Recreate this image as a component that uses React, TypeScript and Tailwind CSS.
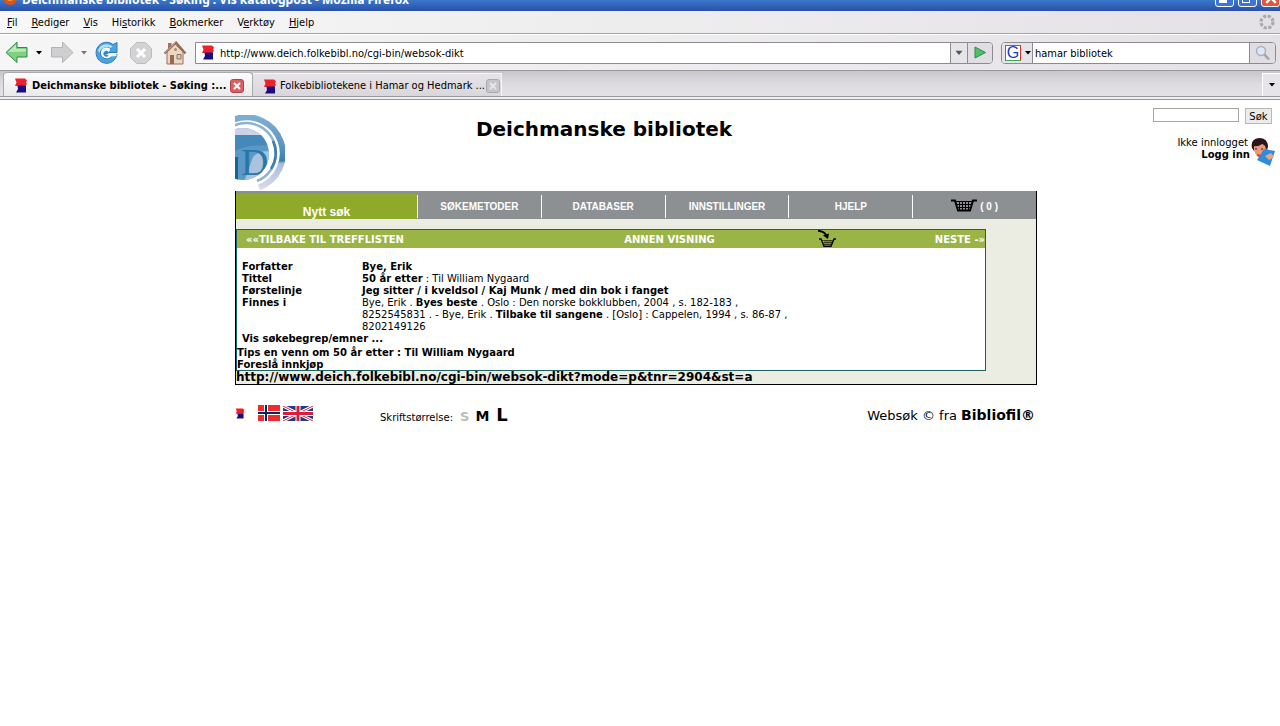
import type { ReactNode } from "react";

function Favicon({ className = "w-[14px] h-[15px]" }: { className?: string }) {
  return (
    <svg viewBox="0 0 14 15" className={className} aria-hidden="true">
      <path d="M1 .5h10l2 2-1 2 1 1.500-2 2H1l1.500-3.500z" fill="#ee2029" />
      <path d="M3.500 7.500H12v7H2l2-3.500z" fill="#1a0d80" />
    </svg>
  );
}

function Caret({ className = "text-black" }: { className?: string }) {
  return (
    <svg viewBox="0 0 6 4" className={`w-[6px] h-[4px] ${className}`} aria-hidden="true">
      <path d="M0 0h6L3 3.500z" fill="currentColor" />
    </svg>
  );
}

function Arrow({ forward = false }: { forward?: boolean }) {
  return (
    <svg viewBox="0 0 24 24" className="w-6 h-6" aria-hidden="true">
      {forward ? (
        <path d="M23 11.500 12.500 1v5.500H1.500v9.500h11v5.500z" fill="#cfcfd1" stroke="#b3b3b5" strokeLinejoin="round" />
      ) : (
        <>
          <path d="M1 11.500 12 1v5.500h10v9.500H12v5.500z" fill="#7fd083" stroke="#35884a" strokeLinejoin="round" />
          <path d="M3 11 11 3.500V8h10v2.500z" fill="#b9ebb3" />
        </>
      )}
    </svg>
  );
}

function Reload() {
  return (
    <svg viewBox="0 0 24 24" className="w-6 h-6" aria-hidden="true">
      <path d="M22 13A10.500 10.500 0 1 1 18 3.500l4-2V11.500H13l3-3.500A6 6 0 1 0 16.500 15z" fill="#4ba3df" stroke="#2e78bd" strokeLinejoin="round" />
      <path d="M3 9.500a9 9 0 0 1 14.500-4l-2 1.500A7.500 7.500 0 0 0 4.500 12z" fill="#b5e1f7" />
      <path d="M16 15.500A5 5 0 1 1 15.500 8.500L13 12h8.500v3z" fill="#eef7fc" />
      <path d="M13.500 14.500a2.800 2.800 0 1 1 0-3.500v2h-3z" fill="#2f86cd" />
    </svg>
  );
}

function Stop() {
  return (
    <svg viewBox="0 0 24 24" className="w-6 h-6" aria-hidden="true">
      <path d="M7.500 1.500h9l6 6v9l-6 6h-9l-6-6v-9z" fill="#d3d3d5" stroke="#bcbcbe" />
      <path d="m8 8 8 8m0-8-8 8" stroke="#fff" strokeWidth="3" />
    </svg>
  );
}

function Home() {
  return (
    <svg viewBox="0 0 24 24" className="w-6 h-6" aria-hidden="true">
      <path d="M5 2h3.500v7H5z" fill="#a8705a" />
      <path d="M4 11 12 3l8 8v12H4z" fill="#ead9c1" stroke="#96705a" />
      <path d="M1.500 12.500 13 1.500l9.500 11" fill="none" stroke="#94695a" strokeWidth="2.200" />
      <path d="M2 11.500 12.500 1.500" fill="none" stroke="#cdaa98" />
      <path d="M7 14h4v9H7z" fill="#9a6752" />
      <path d="M14 13.500h4V18h-4z" fill="#bcd3df" stroke="#96705a" />
      <circle cx="12.500" cy="8.500" r="1.500" fill="#b58569" />
    </svg>
  );
}

function Throbber() {
  return (
    <svg viewBox="0 0 16 16" className="w-4 h-4" aria-hidden="true">
      <circle cx="8" cy="8" r="6" fill="none" stroke="#aaaaac" strokeWidth="3.200" strokeDasharray="3.100 1.612" />
    </svg>
  );
}

function Basket() {
  return (
    <svg viewBox="0 0 26 13" className="mb-[3px] h-[13px] w-[26px]" aria-hidden="true">
      <path d="M0 1.500h4L7 11.500h12L22 1.500h4" fill="none" stroke="#000" strokeWidth="2" />
      <path d="M5 2.500h16M5.500 5.500h15M6.500 8.500h13M8.500 2v9M11.500 2v9M14.500 2v9M17.500 2v9" stroke="#000" />
    </svg>
  );
}

function AddToBasket() {
  return (
    <svg viewBox="0 0 18 18" className="w-[18px] h-[18px]" aria-hidden="true">
      <path d="M0 .800Q7 1 9 7" fill="none" stroke="#000" strokeWidth="1.800" />
      <path d="M5 5.500 10 9l1-5.500" fill="#000" />
      <path d="M1 9h2L6 16.300h7L16 9h2" fill="none" stroke="#000" strokeWidth="1.300" />
      <path d="M4 10.500h11M5 12.500h9M5 14.500h8M7 10v6M9 10v6M11 10v6M13 10v6" stroke="#000" strokeWidth=".500" />
    </svg>
  );
}

function Logo() {
  return (
    <svg viewBox="0 0 50 76" className="w-[50px] h-[76px]" role="img" aria-label="Deichmanske bibliotek">
      <defs>
        <clipPath id="disc">
          <circle cx="8" cy="39" r="26" />
        </clipPath>
        <linearGradient id="ring" x1="0" y1="0" x2="0" y2="1">
          <stop offset="0" stopColor="#7fadd2" />
          <stop offset=".4" stopColor="#5c95c2" />
          <stop offset=".62" stopColor="#3d80ad" />
          <stop offset=".66" stopColor="#a9bcdb" />
          <stop offset="1" stopColor="#d5d9ea" />
        </linearGradient>
      </defs>
      <path d="M-1 4.500A35.500 35.500 0 1 1 24 72.500" fill="none" stroke="url(#ring)" strokeWidth="6" />
      <path d="M-1 10.500A30 30 0 0 1 41 38A30 30 0 0 1 22 66" fill="none" stroke="#8fb2d4" strokeWidth="2.500" />
      <path d="M38 26A30 30 0 0 1 36 54" fill="none" stroke="#3b7fae" strokeWidth="2.500" />
      <g clipPath="url(#disc)">
        <path d="M0 0h50v76H0z" fill="#5a99c6" />
        <path d="M0 0h50v20H0z" fill="#cdd3e6" />
        <path d="M0 20h50v11Q14 28 0 36z" fill="#4489b9" />
        <path d="M18 42q8-9 22-4v14q-12 3-16 15H9z" fill="#a9c3df" />
        <path d="M0 42h3v24H0z" fill="#186391" />
        <text x="6" y="60" fontFamily="Liberation Serif, serif" fontSize="38" fill="#2a77a5">D</text>
      </g>
    </svg>
  );
}

function Reader() {
  return (
    <svg viewBox="0 0 24 28" className="mt-px h-7 w-6" aria-hidden="true">
      <path d="M2 8q1 9 7 12l8-6V6L8 4z" fill="#e99a78" />
      <path d="M1 10Q-1 1 8 0q9 0 9 9l-2 3q0-5-4-6-4 3-8 2v5z" fill="#2b1518" />
      <path d="m13 11 11 2-5 15L6 22z" fill="#2d8be0" />
      <path d="m14 18 6-3 3 4-5 3z" fill="#e8a589" />
      <path d="m6 16 4 1-1 2-3-1z" fill="#d8402f" />
      <path d="M4 11h2m4 0h2" stroke="#222" />
    </svg>
  );
}

function NorwegianFlag() {
  return (
    <svg viewBox="0 0 22 16" className="w-[22px] h-4" role="img" aria-label="Norsk">
      <path d="M0 0h22v16H0z" fill="#ef2b2d" />
      <path d="M8 0v16M0 8h22" stroke="#fff" strokeWidth="4" />
      <path d="M8 0v16M0 8h22" stroke="#002868" strokeWidth="2" />
    </svg>
  );
}

function BritishFlag() {
  return (
    <svg viewBox="0 0 30 15" preserveAspectRatio="none" className="w-[30px] h-[15px]" role="img" aria-label="English">
      <path d="M0 0h30v15H0z" fill="#253a82" />
      <path d="m0 0 30 15M30 0 0 15" stroke="#fff" strokeWidth="3" />
      <path d="m0 0 30 15M30 0 0 15" stroke="#d62a40" strokeWidth="1" />
      <path d="M15 0v15M0 7.500h30" stroke="#fff" strokeWidth="5" />
      <path d="M15 0v15M0 7.500h30" stroke="#d6203a" strokeWidth="3" />
    </svg>
  );
}

const menus: [string, string, string][] = [
  ["", "F", "il"],
  ["", "R", "ediger"],
  ["", "V", "is"],
  ["Hi", "s", "torikk"],
  ["", "B", "okmerker"],
  ["V", "e", "rktøy"],
  ["", "H", "jelp"],
];

const navItems = ["SØKEMETODER", "DATABASER", "INNSTILLINGER", "HJELP"];

function Record({ label, children }: { label: string; children: ReactNode }) {
  return (
    <tr className="align-top">
      <th scope="row" className="w-[120px] text-left font-bold">{label}</th>
      <td>{children}</td>
    </tr>
  );
}

function BrowserChrome() {
  return (
    <header className="font-['DejaVu_Sans_Condensed','DejaVu_Sans',sans-serif] text-[11px] text-black">
      <div className="flex h-[11px] items-end justify-between overflow-hidden bg-linear-to-b from-[#3a78cb] to-[#2a4fa8] pl-[3px]">
        <div className="flex items-end gap-[5px]">
          <svg viewBox="0 0 14 14" className="mb-[6px] h-[14px] w-[14px] shrink-0" aria-hidden="true">
            <circle cx="7" cy="7" r="7" fill="#d8541c" />
            <circle cx="7" cy="6" r="4" fill="#f3a03c" />
          </svg>
          <span className="mb-[3px] whitespace-nowrap font-['Noto_Sans',sans-serif] text-[12px] leading-[16px] font-bold text-white">
            Deichmanske bibliotek - Søking : Vis katalogpost - Mozilla Firefox
          </span>
        </div>
        <div className="mb-[4px] flex gap-[4px]">
          <button type="button" aria-label="Minimer" className="flex h-[18px] w-[19px] items-end rounded-[3px] border border-white bg-[#3d74d8] pb-[3px] pl-[3px]">
            <span className="h-[3px] w-[8px] bg-white" />
          </button>
          <button type="button" aria-label="Gjenopprett" className="flex h-[18px] w-[19px] items-end rounded-[3px] border border-white bg-[#3d74d8] pb-[3px] pl-[3px]">
            <span className="h-[8px] w-[8px] border border-white" />
          </button>
          <button type="button" aria-label="Lukk" className="flex h-[18px] w-[19px] items-center justify-center rounded-[3px] border border-white bg-[#e0563a]">
            <svg viewBox="0 0 10 10" className="h-[12px] w-[12px]"><path d="m1 1 8 8m0-8-8 8" stroke="#fff" strokeWidth="2" /></svg>
          </button>
        </div>
      </div>

      <div className="flex h-[23px] items-center justify-between border-b border-[#a5a4a8] bg-linear-to-r from-[#f8f8f8] via-[#eeedee] to-[#e4e1e6] pr-[5px] pl-[7px]">
        <nav className="flex gap-[14px] pt-px">
          {menus.map(([before, key, after]) => (
            <button type="button" key={key + after}>
              {before}<u>{key}</u>{after}
            </button>
          ))}
        </nav>
        <Throbber />
      </div>

      <div className="flex h-9 items-center border-t border-white bg-linear-to-r from-[#f6f6f6] via-[#eeedee] to-[#e4e1e6] pr-1 pl-[5px]">
        <button type="button" aria-label="Tilbake"><Arrow /></button>
        <button type="button" aria-label="Tilbakehistorikk" className="ml-[7px]"><Caret /></button>
        <button type="button" aria-label="Fremover" className="ml-[8px]"><Arrow forward /></button>
        <button type="button" aria-label="Fremoverhistorikk" className="ml-[7px]"><Caret className="text-[#77777a]" /></button>
        <button type="button" aria-label="Last på nytt" className="ml-[8px]"><Reload /></button>
        <button type="button" aria-label="Stopp" className="ml-[10px]"><Stop /></button>
        <button type="button" aria-label="Hjem" className="ml-[10px]"><Home /></button>
        <div className="ml-[8px] flex h-[22px] min-w-0 flex-1 items-center overflow-hidden rounded-r-[4px] border border-[#8c8b90] bg-white">
          <span className="ml-[5px] shrink-0"><Favicon /></span>
          <input aria-label="Adresse" defaultValue="http://www.deich.folkebibl.no/cgi-bin/websok-dikt" className="ml-[5px] h-full min-w-0 flex-1 pt-px outline-none" />
          <button type="button" aria-label="Vis adresser" className="flex h-full w-[17px] items-center justify-center border-l border-[#8c8b90] bg-[#e6e4e8]"><Caret className="scale-125 text-[#555558]" /></button>
          <button type="button" aria-label="Gå" className="flex h-full w-[25px] items-center justify-center border-l border-[#8c8b90] bg-[#e0dee2]">
            <svg viewBox="0 0 12 12" className="h-[13px] w-[12px]"><path d="M1 .500 11.500 6 1 11.500z" fill="#4fc06a" stroke="#2a8a48" /></svg>
          </button>
        </div>
        <div className="ml-[8px] flex h-[22px] w-[275px] items-center overflow-hidden rounded-[4px] border border-[#8c8b90] bg-white">
          <button type="button" aria-label="Velg søkemotor" className="flex h-full w-[31px] items-center gap-[4px] border-r border-[#8c8b90] bg-[#e6e4e8] pl-[3px]">
            <span className="flex h-4 w-4 items-center justify-center border border-t-[#3f72d8] border-r-[#d8362c] border-b-[#3aa757] border-l-[#3f72d8] bg-white font-['Liberation_Sans',sans-serif] text-[16px] leading-[14px] text-[#123fbd]">G</span>
            <Caret />
          </button>
          <input aria-label="Søk på nettet" defaultValue="hamar bibliotek" className="h-full min-w-0 flex-1 pt-px pl-[2px] outline-none" />
          <button type="button" aria-label="Søk på nettet nå" className="flex h-full w-[26px] items-center justify-center border-l border-[#8c8b90] bg-[#e0dee2]">
            <svg viewBox="0 0 16 16" className="h-4 w-4"><path d="m9 9 5 5.500" stroke="#a3a2a6" strokeWidth="2.500" /><circle cx="6" cy="6" r="4.500" fill="#dbe8f6" stroke="#a9b1c0" strokeWidth="1.500" /></svg>
          </button>
        </div>
      </div>

      <div className="flex h-[27px] items-end justify-between border-t border-b border-[#99989c] bg-linear-to-b from-[#c8c6cb] via-[#dddbdf] to-[#e3e1e5]">
        <div className="flex items-end pl-[3px]">
          <div className="flex h-[24px] w-[250px] items-center rounded-t-[4px] border border-b-0 border-[#aaa9ad] bg-linear-to-b from-[#fcfcfc] to-[#eaeaec] pt-[2px] pl-[10px]">
            <Favicon />
            <button type="button" className="ml-[4px] w-[195px] text-left font-bold whitespace-nowrap">Deichmanske bibliotek - Søking :...</button>
            <button type="button" aria-label="Lukk fane" className="ml-[3px] flex h-[14px] w-[14px] items-center justify-center rounded-[3px] border border-[#b54148] bg-[#dc5f63]">
              <svg viewBox="0 0 8 8" className="h-[8px] w-[8px]"><path d="m1 1 6 6m0-6-6 6" stroke="#fff" strokeWidth="2" /></svg>
            </button>
          </div>
          <div className="flex h-[23px] w-[249px] items-center border-t border-r border-[#f5f5f6] bg-linear-to-b from-[#e6e4e8] to-[#d9d7db] pt-[2px] pl-[10px]">
            <Favicon />
            <button type="button" className="ml-[3px] shrink-0 text-left whitespace-nowrap">Folkebibliotekene i Hamar og Hedmark ...</button>
            <button type="button" aria-label="Lukk fane" className="ml-px flex h-[14px] w-[14px] shrink-0 items-center justify-center rounded-[3px] border border-[#a9a8ac] bg-[#c6c5c9]">
              <svg viewBox="0 0 8 8" className="h-[8px] w-[8px]"><path d="m1 1 6 6m0-6-6 6" stroke="#e6e6e8" strokeWidth="2" /></svg>
            </button>
          </div>
        </div>
        <button type="button" aria-label="Alle faner" className="flex h-[23px] w-[18px] items-center justify-center border-t border-l border-white bg-[#e6e4e8]"><Caret /></button>
      </div>
      <div className="h-[3px] border-b border-[#99989c] bg-[#efeef0]" />
    </header>
  );
}

export default function App() {
  return (
    <div className="min-h-screen bg-white font-['DejaVu_Sans',Verdana,sans-serif] text-[10px] leading-[12px] text-black">
      <BrowserChrome />
      <div className="grid grid-cols-[235px_minmax(0,1fr)_243px]">
        <main className="col-start-2">
          <div className="grid grid-cols-[50px_1fr_114px] items-start pt-[15px]">
            <Logo />
            <h1 className="text-center text-[20px] leading-[28px] font-bold">Deichmanske bibliotek</h1>
          </div>

          <div className="border border-t-0 border-black bg-[#ebede2]">
            <nav className="grid grid-cols-[181px_repeat(5,minmax(0,1fr))] bg-[#8c9092] pt-[3px] font-['Liberation_Sans',Arial,sans-serif] font-bold text-white">
              <a href="#nytt" className="flex h-[25px] items-end justify-center bg-[#8fa92b] text-[12px] leading-[14px]">Nytt søk</a>
              {navItems.map((item) => (
                <a href="#meny" key={item} className="my-auto flex h-[23px] items-center justify-center border-l border-white">{item}</a>
              ))}
              <a href="#kurv" className="my-auto flex h-[23px] items-center justify-center gap-[3px] border-l border-white">
                <Basket />
                <span>( 0 )</span>
              </a>
            </nav>

            <section className="mt-[10px] mr-[50px] border border-[#1f5f66] bg-white">
              <div className="grid h-[18px] grid-cols-[361px_143px_1fr_auto] items-center bg-[#9ab446] font-bold text-white">
                <a href="#treff" className="pt-px pl-[9px]">««TILBAKE TIL TREFFLISTEN</a>
                <a href="#visning" className="pt-px text-center">ANNEN VISNING</a>
                <a href="#legg" aria-label="Legg i kurv" className="pl-[77px]"><AddToBasket /></a>
                <a href="#neste" className="pt-px">NESTE -»</a>
              </div>
              <div className="-mb-px pt-[13px]">
                <table className="ml-[5px] border-collapse">
                  <tbody>
                    <Record label="Forfatter"><a href="#bye" className="font-bold">Bye, Erik</a></Record>
                    <Record label="Tittel"><b>50 år etter</b> : Til William Nygaard</Record>
                    <Record label="Førstelinje"><b>Jeg sitter / i kveldsol / Kaj Munk / med din bok i fanget</b></Record>
                    <Record label="Finnes i">
                      Bye, Erik . <a href="#beste" className="font-bold">Byes beste</a> . Oslo : Den norske bokklubben, 2004 , s. 182-183 ,
                      <br />
                      8252545831 . - Bye, Erik . <a href="#sangene" className="font-bold">Tilbake til sangene</a> . [Oslo] : Cappelen, 1994 , s. 86-87 ,
                      <br />
                      8202149126
                    </Record>
                  </tbody>
                </table>
                <a href="#emner" className="block pl-[5px] font-bold">Vis søkebegrep/emner ...</a>
                <a href="#tips" className="mt-[2px] block font-bold">Tips en venn om 50 år etter : Til William Nygaard</a>
                <a href="#forslag" className="block font-bold">Foreslå innkjøp</a>
              </div>
            </section>
            <p className="text-[12px] leading-[13px] font-bold">http://www.deich.folkebibl.no/cgi-bin/websok-dikt?mode=p&amp;tnr=2904&amp;st=a</p>
          </div>

          <footer className="flex items-start justify-between pt-5">
            <div className="flex items-start">
              <div className="flex items-center">
                <Favicon className="h-[11px] w-[10px]" />
                <a href="#no" className="ml-[13px]"><NorwegianFlag /></a>
                <a href="#en" className="ml-[3px]"><BritishFlag /></a>
              </div>
              <div className="ml-[67px] flex items-baseline leading-[20px]">
                <span>Skriftstørrelse:</span>
                <button type="button" className="ml-[7px] text-[13px] font-bold text-[#b9bcbc]">S</button>
                <button type="button" className="ml-[6px] text-[14px] font-bold">M</button>
                <button type="button" className="ml-[7px] text-[18px] font-bold">L</button>
              </div>
            </div>
            <p className="pr-[2px] text-[13px] leading-[20px]">Websøk © fra <a href="#bibliofil" className="text-[14px] font-bold">Bibliofil®</a></p>
          </footer>
        </main>

        <aside className="flex flex-col items-end pt-[8px] pr-[5px]">
          <form className="flex items-start gap-[6px] pr-[3px]">
            <input aria-label="Søkeord" className="h-[14px] w-[86px] border border-[#a5a5a5] bg-white px-1" />
            <button type="button" className="h-[16px] w-[27px] border border-[#b8b8b8] bg-[#ececec] pt-px leading-[14px]">Søk</button>
          </form>
          <div className="mt-[13px] flex items-start">
            <div className="text-right">
              <p className="pr-[3px]">Ikke innlogget</p>
              <a href="#logginn" className="block pr-px font-bold">Logg inn</a>
            </div>
            <Reader />
          </div>
        </aside>
      </div>
    </div>
  );
}
